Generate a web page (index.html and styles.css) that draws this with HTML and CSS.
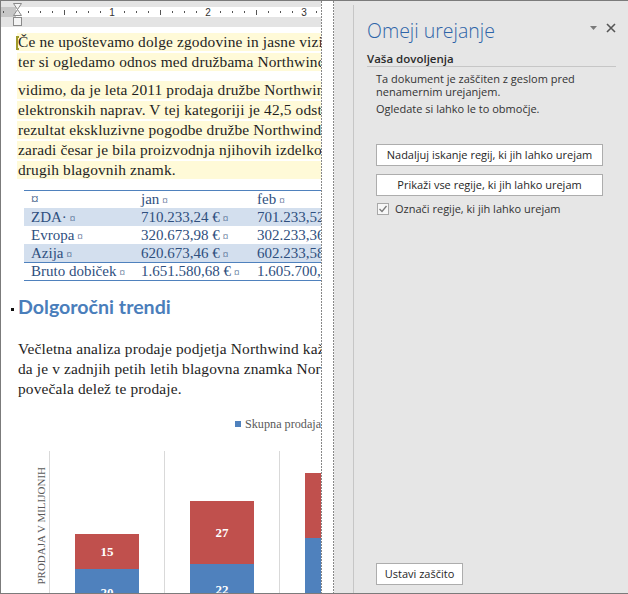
FILE: index.html
```html
<!DOCTYPE html>
<html lang="sl">
<head>
<meta charset="utf-8">
<title>Omeji urejanje</title>
<link rel="stylesheet" href="styles.css">
</head>
<body>
<div class="frame">
  <div class="doc">
    <div class="ruler">
      <div class="band">
        <div class="rmargin"><i class="dot"></i></div>
        <div class="scale">
          <span class="cell"><i class="dot"></i></span><span class="cell"><i class="dot"></i></span><span class="cell"><i class="dot"></i></span><span class="cell"><i class="tick"></i></span>
          <span class="cell"><i class="dot"></i></span><span class="cell"><i class="dot"></i></span><span class="cell"><i class="dot"></i></span><span class="cell num">1</span>
          <span class="cell"><i class="dot"></i></span><span class="cell"><i class="dot"></i></span><span class="cell"><i class="dot"></i></span><span class="cell"><i class="tick"></i></span>
          <span class="cell"><i class="dot"></i></span><span class="cell"><i class="dot"></i></span><span class="cell"><i class="dot"></i></span><span class="cell num">2</span>
          <span class="cell"><i class="dot"></i></span><span class="cell"><i class="dot"></i></span><span class="cell"><i class="dot"></i></span><span class="cell"><i class="tick"></i></span>
          <span class="cell"><i class="dot"></i></span><span class="cell"><i class="dot"></i></span><span class="cell"><i class="dot"></i></span><span class="cell num">3</span>
          <span class="cell"><i class="dot"></i></span><span class="cell"><i class="dot"></i></span>
        </div>
      </div>
      <svg class="indent" width="9" height="23" viewBox="0 0 9 23">
        <path d="M0.5 0.5 H8.5 L4.5 6.5 L8.5 12.5 H0.5 L4.5 6.5 Z" fill="#f4f4f4" stroke="#8a8a8a" stroke-width="1"/>
        <rect x="0.5" y="14.5" width="8" height="8" fill="#f4f4f4" stroke="#8a8a8a" stroke-width="1"/>
      </svg>
    </div>

    <div class="page">
      <div class="para hl p1">
        <span class="ln"><i class="mark"></i>Če ne upoštevamo dolge zgodovine in jasne vizije družbe Northwind</span>
        <span class="ln">ter si ogledamo odnos med družbama Northwind Traders in</span>
      </div>
      <div class="para hl p2">
        <span class="ln">vidimo, da je leta 2011 prodaja družbe Northwind Traders</span>
        <span class="ln">elektronskih naprav. V tej kategoriji je 42,5 odstotka</span>
        <span class="ln">rezultat ekskluzivne pogodbe družbe Northwind</span>
        <span class="ln">zaradi česar je bila proizvodnja njihovih izdelkov</span>
        <span class="ln">drugih blagovnih znamk.</span>
      </div>

      <div class="tbl">
        <div class="tr head"><span>¤</span><span>jan<i class="cm">¤</i></span><span>feb<i class="cm">¤</i></span></div>
        <div class="tr band1"><span>ZDA·<i class="cm">¤</i></span><span>710.233,24 €<i class="cm">¤</i></span><span>701.233,52 €<i class="cm">¤</i></span></div>
        <div class="tr"><span>Evropa<i class="cm">¤</i></span><span>320.673,98 €<i class="cm">¤</i></span><span>302.233,36 €<i class="cm">¤</i></span></div>
        <div class="tr band1"><span>Azija<i class="cm">¤</i></span><span>620.673,46 €<i class="cm">¤</i></span><span>602.233,58 €<i class="cm">¤</i></span></div>
        <div class="tr total"><span>Bruto dobiček<i class="cm">¤</i></span><span>1.651.580,68 €<i class="cm">¤</i></span><span>1.605.700,46 €<i class="cm">¤</i></span></div>
      </div>

      <h2 class="heading"><i class="bullet"></i>Dolgoročni trendi</h2>

      <div class="para p3">
        <span class="ln">Večletna analiza prodaje podjetja Northwind kaže,</span>
        <span class="ln">da je v zadnjih petih letih blagovna znamka Northwind</span>
        <span class="ln">povečala delež te prodaje.</span>
      </div>

      <div class="chart">
        <div class="legend"><i class="lsq"></i><span>Skupna prodaja v milijonih</span></div>
        <div class="plot">
          <div class="ylab"><span>PRODAJA V MILIJONIH</span></div>
          <div class="cat">
            <div class="bar" style="margin-top:83px">
              <div class="seg red" style="height:35px">15</div>
              <div class="seg blue" style="height:47px">20</div>
            </div>
          </div>
          <div class="cat">
            <div class="bar" style="margin-top:50px">
              <div class="seg red" style="height:63px">27</div>
              <div class="seg blue" style="height:51px">22</div>
            </div>
          </div>
          <div class="cat">
            <div class="bar" style="margin-top:22px">
              <div class="seg red" style="height:65px">28</div>
              <div class="seg blue" style="height:70px">30</div>
            </div>
          </div>
        </div>
      </div>
    </div>
  </div>

  <div class="vdash"></div>
  <div class="gap"></div>
  <div class="vdash"></div>

  <div class="panel">
    <div class="pin">
      <div class="ptitle">
        <h1>Omeji urejanje</h1>
        <svg class="drop" width="7" height="4" viewBox="0 0 7 4"><path d="M0 0 H7 L3.5 4 Z" fill="#7a7a7a"/></svg>
        <svg class="close" width="10" height="10" viewBox="0 0 10 10"><path d="M1 1 L9 9 M9 1 L1 9" stroke="#555" stroke-width="1.6" fill="none"/></svg>
      </div>
      <div class="sect">Vaša dovoljenja</div>
      <p class="ptext first">Ta dokument je zaščiten z geslom pred<br>nenamernim urejanjem.</p>
      <p class="ptext">Ogledate si lahko le to območje.</p>
      <div class="btn b1">Nadaljuj iskanje regij, ki jih lahko urejam</div>
      <div class="btn b2">Prikaži vse regije, ki jih lahko urejam</div>
      <label class="chk">
        <svg class="box" width="12" height="12" viewBox="0 0 12 12"><rect x="0.5" y="0.5" width="11" height="11" fill="#f7f7f7" stroke="#a8a8a8"/><path d="M2.5 6 L5 8.5 L9.5 3" stroke="#7a7a7a" stroke-width="1.3" fill="none"/></svg>
        <span>Označi regije, ki jih lahko urejam</span>
      </label>
      <div class="btn stop">Ustavi zaščito</div>
    </div>
  </div>
</div>
</body>
</html>
```

FILE: styles.css
```css
* { box-sizing: border-box; margin: 0; padding: 0; }
html, body { width: 628px; height: 594px; overflow: hidden; background: #fff; }

.frame {
  width: 628px;
  height: 594px;
  display: flex;
  border-top: 1px solid #7b7b7b;
  border-left: 1px solid #7b7b7b;
  border-bottom: 1px solid #7b7b7b;
}

/* ---------- document ---------- */
.doc {
  width: 320px;
  flex: none;
  overflow: hidden;
  display: flex;
  flex-direction: column;
  background: #fff;
}
.vdash {
  width: 1px;
  flex: none;
  background: repeating-linear-gradient(to bottom, #888 0 2px, transparent 2px 3px);
}
.gap { width: 11px; flex: none; background: #fff; }

.ruler {
  position: relative;
  flex: none;
  height: 26px;
  padding-top: 6px;
  background: #e4e4e4;
}
.band { height: 10px; background: #fff; display: flex; }
.rmargin {
  width: 15px;
  flex: none;
  background: #c6c6c6;
  display: flex;
  align-items: center;
  padding-left: 2px;
}
.scale { display: flex; padding-left: 6px; align-items: center; }
.cell {
  width: 12px;
  flex: none;
  height: 10px;
  display: flex;
  align-items: center;
  justify-content: center;
}
.dot { display: block; width: 1px; height: 2px; background: #555; }
.tick { display: block; width: 1px; height: 5px; background: #555; }
.num { font: 10px "Liberation Sans", Arial, sans-serif; color: #333; }
.indent { position: absolute; left: 12px; top: 2px; }

.page {
  flex: 1;
  padding-left: 17px;
  font-family: "Liberation Serif", "Times New Roman", serif;
  font-size: 15px;
  color: #1e1e1e;
}
.para { display: flex; flex-direction: column; gap: 2px; }
.ln {
  display: block;
  height: 18px;
  line-height: 18px;
  font-size: 15.4px;
  letter-spacing: 0.15px;
  white-space: nowrap;
}
.hl .ln { background: #fffad8; margin-left: -1px; padding-left: 1px; }
.p1 { margin-top: 6px; }
.p2 { margin-top: 10px; }
.mark {
  display: inline-block;
  width: 3px;
  height: 14px;
  border: 2px solid #a09b2c;
  border-right: 0;
  margin-left: -2px;
  margin-right: -1px;
  vertical-align: -3px;
}

.tbl {
  margin-top: 11px;
  margin-left: 6px;
  width: 420px;
  border-top: 1px solid #4f81bd;
  border-bottom: 1px solid #4f81bd;
  color: #2f4f7e;
}
.tr {
  display: grid;
  grid-template-columns: 110px 116px 1fr;
  height: 18px;
  line-height: 18px;
  white-space: nowrap;
}
.tr span { padding-left: 7px; }
.tr.head { height: 17px; line-height: 17px; }
.tr.band1 { background: #d3dfee; }
.tr.total { border-top: 1px solid #4f81bd; height: 18px; line-height: 17px; }
.cm { font-style: normal; font-size: 11px; margin-left: 3px; }

.heading {
  margin-top: 14px;
  display: flex;
  align-items: flex-start;
  height: 24px;
  line-height: 24px;
  font-family: Lato, "Open Sans", sans-serif;
  font-weight: 700;
  font-size: 19.6px;
  color: #4a7ebb;
  white-space: nowrap;
}
.bullet {
  display: block;
  flex: none;
  width: 3px;
  height: 3px;
  background: #111;
  margin: 13px 4px 0 -7px;
}

.p3 { margin-top: 20px; gap: 0; }
.p3 .ln { height: 20px; line-height: 20px; }

.chart { margin-left: -17px; }
.legend {
  margin-top: 17px;
  padding-left: 234px;
  display: flex;
  align-items: center;
  height: 16px;
  font-size: 12.2px;
  color: #595959;
  white-space: nowrap;
}
.lsq { display: block; flex: none; width: 6px; height: 6px; background: #4f81bd; margin-right: 4px; }
.plot { margin-top: 19px; display: flex; height: 160px; }
.ylab {
  width: 48px;
  flex: none;
  display: flex;
  justify-content: flex-end;
  align-items: flex-start;
  padding-right: 1px;
  padding-top: 16px;
}
.ylab span {
  writing-mode: vertical-rl;
  transform: rotate(180deg);
  font-size: 11px;
  line-height: 14px;
  color: #595959;
  white-space: nowrap;
}
.cat {
  width: 115px;
  flex: none;
  border-left: 1px solid #d9d9d9;
  padding-left: 25px;
}
.bar { width: 64px; display: flex; flex-direction: column; }
.seg {
  display: flex;
  align-items: center;
  justify-content: center;
  color: #fff;
  font-weight: 700;
  font-size: 13px;
}
.red { background: #c0504d; }
.blue { background: #4f81bd; }

/* ---------- task pane ---------- */
.panel {
  flex: 1;
  display: flex;
  background: #e6e6e6;
  padding: 4px 0 0 19px;
}
.pin {
  flex: 1;
  display: flex;
  flex-direction: column;
  border-left: 1px solid #c6c6c6;
  padding: 13px 12px 8px 13px;
  font-family: "Open Sans", "Noto Sans", sans-serif;
  color: #333;
}
.ptitle { display: flex; align-items: flex-start; }
.ptitle h1 {
  flex: 1;
  font-size: 19.5px;
  font-weight: 300;
  line-height: 26px;
  color: #2e64a8;
  white-space: nowrap;
}
.drop { flex: none; margin-top: 8px; margin-right: 9px; }
.close { flex: none; margin-top: 5px; }
.sect {
  margin-top: 8px;
  font-size: 11.5px;
  font-weight: 600;
  line-height: 14px;
  color: #2b2b2b;
  border-bottom: 1px solid #c6c6c6;
}
.ptext {
  margin-left: 9px;
  margin-top: 4px;
  font-size: 11px;
  line-height: 13px;
  color: #333;
}
.ptext.first { margin-top: 5px; }
.btn {
  margin-left: 9px;
  width: 227px;
  height: 22px;
  border: 1px solid #adadad;
  background: #fff;
  font-size: 11px;
  line-height: 20px;
  text-align: center;
  color: #262626;
  white-space: nowrap;
}
.b1 { margin-top: 29px; }
.b2 { margin-top: 8px; }
.chk {
  margin-top: 7px;
  margin-left: 10px;
  display: flex;
  align-items: center;
  height: 12px;
  font-size: 11px;
  line-height: 12px;
  color: #333;
}
.chk span { margin-left: 6px; }
.btn.stop { margin-top: auto; width: 87px; }
```
